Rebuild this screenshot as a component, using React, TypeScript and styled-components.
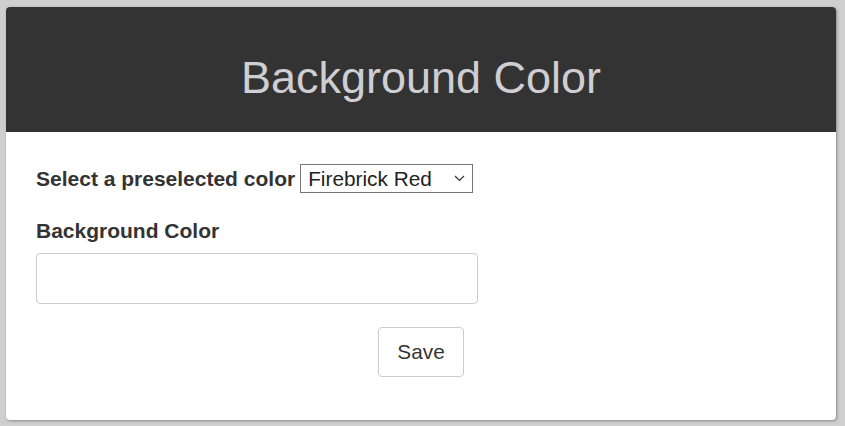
import React from "react";
import styled, { createGlobalStyle } from "styled-components";

const GlobalStyle = createGlobalStyle`
  html, body {
    margin: 0;
    padding: 0;
    background: #cfcfcf;
  }
  body {
    font-family: "Liberation Sans", Arial, sans-serif;
  }
`;

const Page = styled.div`
  padding: 7px 9px 0 6px;
  height: 426px;
  box-sizing: border-box;
`;

const Card = styled.div`
  height: 413px;
  background: #fff;
  border-radius: 4px;
  box-shadow: 1px 1px 3px rgba(0, 0, 0, 0.35);
  overflow: hidden;
  display: flex;
  flex-direction: column;
`;

const Header = styled.header`
  height: 125px;
  box-sizing: border-box;
  background: #333;
  padding-top: 48px;
  text-align: center;
`;

const Title = styled.h1`
  margin: 0;
  font-size: 45px;
  line-height: 45px;
  font-weight: 400;
  color: #cfcfd3;
`;

const Form = styled.form`
  display: flex;
  flex-direction: column;
  padding: 32px 30px 0 30px;
`;

const SelectRow = styled.div`
  display: flex;
  align-items: center;
  gap: 5px;
  height: 29px;
`;

const Label = styled.label<{ $block?: boolean }>`
  font-size: 21px;
  line-height: 24px;
  font-weight: 700;
  color: #333;
  margin-top: ${(p) => (p.$block ? "26px" : "0")};
`;

const SelectWrap = styled.div`
  position: relative;
  width: 173px;
  height: 29px;
`;

const Select = styled.select`
  appearance: none;
  width: 100%;
  height: 100%;
  box-sizing: border-box;
  border: 1px solid #767676;
  border-radius: 0;
  background: #fff;
  color: #222;
  font-family: "Liberation Sans", Arial, sans-serif;
  font-size: 20.8px;
  padding: 0 0 0 7px;
  outline: none;
`;

const Chevron = styled.svg`
  position: absolute;
  right: 8px;
  top: 11px;
  pointer-events: none;
`;

const Input = styled.input`
  margin-top: 10px;
  width: 442px;
  height: 51px;
  box-sizing: border-box;
  border: 1px solid #ccc;
  border-radius: 4px;
  font-size: 20.8px;
  padding: 0 12px;
  outline: none;
`;

const ButtonRow = styled.div`
  display: flex;
  justify-content: center;
  margin-top: 23px;
  margin-left: -30px;
  margin-right: -30px;
`;

const Button = styled.button`
  width: 86px;
  height: 50px;
  box-sizing: border-box;
  background: #fff;
  border: 1px solid #ccc;
  border-radius: 4px;
  color: #333;
  font-family: "Liberation Sans", Arial, sans-serif;
  font-size: 20.8px;
  cursor: pointer;
`;

export default function App() {
  return (
    <>
      <GlobalStyle />
      <Page>
        <Card>
          <Header>
            <Title>Background Color</Title>
          </Header>
          <Form onSubmit={(e) => e.preventDefault()}>
            <SelectRow>
              <Label htmlFor="preset">Select a preselected color</Label>
              <SelectWrap>
                <Select id="preset" defaultValue="firebrick">
                  <option value="firebrick">Firebrick Red</option>
                  <option value="navy">Navy Blue</option>
                  <option value="forest">Forest Green</option>
                </Select>
                <Chevron width="11" height="7" viewBox="0 0 11 7">
                  <path d="M1 1l4.5 4.5L10 1" fill="none" stroke="#333" strokeWidth="1.2" />
                </Chevron>
              </SelectWrap>
            </SelectRow>
            <Label $block htmlFor="bg">Background Color</Label>
            <Input id="bg" type="text" />
            <ButtonRow>
              <Button type="submit">Save</Button>
            </ButtonRow>
          </Form>
        </Card>
      </Page>
    </>
  );
}
